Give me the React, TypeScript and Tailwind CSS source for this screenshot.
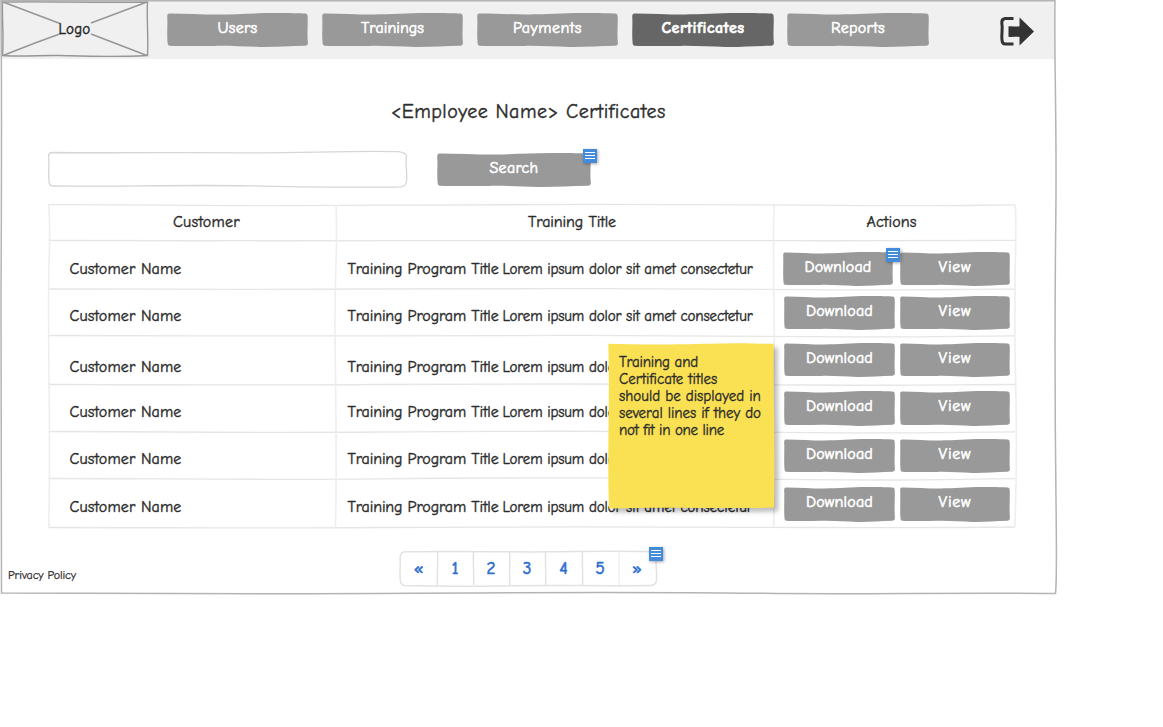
import type { ReactNode } from 'react';

const handwriting = "font-['Comic_Neue',cursive]";

/* Hand-drawn filled block that stretches behind its label. */
function ScribbleFill({ className }: { className: string }) {
  return (
    <svg className={`absolute inset-0 size-full ${className}`} viewBox="0 0 141 34" preserveAspectRatio="none" aria-hidden="true">
      <path d="M2 .4 C20 .3 35 1.6 52 1.500 S85 .2 105 .1 S130 .5 138.500 .4 Q140.600 .6 140.600 3 C141.200 12 139.800 20 140.900 30 Q140.900 32.600 138 32.800 C122 33 108 34.100 93 33.900 S65 32.700 48 32.900 S15 33.200 2.500 32.800 Q.6 32.600 .6 30 C-.3 21 .8 12 .2 3 Q.2 .6 2 .4Z" />
    </svg>
  );
}

function SketchButton({ children, className, active = false }: { children: ReactNode; className: string; active?: boolean }) {
  return (
    <button className={`relative flex shrink-0 justify-center text-base leading-[30px] text-white ${className}`}>
      <ScribbleFill className={active ? 'fill-[#666666]' : 'fill-[#999999]'} />
      <span className={active ? 'relative font-bold [-webkit-text-stroke:0.6px_#fff]' : 'relative [-webkit-text-stroke:0.6px_#fff]'}>{children}</span>
    </button>
  );
}

function NoteMarker({ className }: { className: string }) {
  return (
    <span className={`absolute z-10 flex size-3.5 flex-col items-center gap-[2px] bg-[#438bdb] pt-[3px] shadow-[1px_1px_3px_rgba(0,0,0,0.35)] ${className}`}>
      <span className="h-px w-2.5 bg-white" />
      <span className="h-px w-2.5 bg-white" />
      <span className="h-px w-2.5 bg-white" />
    </span>
  );
}

const tabs = [
  { label: 'Users', width: 'w-[141px] tracking-[0.26px]' },
  { label: 'Trainings', width: 'w-[141px] tracking-[0.03px]' },
  { label: 'Payments', width: 'w-[141px] tracking-[0.5px]' },
  { label: 'Certificates', width: 'w-[142px] -mr-px tracking-[0.48px]', active: true },
  { label: 'Reports', width: 'w-[142px] tracking-[0.3px]' },
];

const rows = [
  { row: 'h-[49px]', text: 'pt-[17px]', actions: 'pt-3 pl-[9px] gap-[7px]', button: 'h-[34px]', download: 'w-[110px]', note: true },
  { row: 'h-[47px]', text: 'pt-[15px]', actions: 'pt-[7px] pl-2.5 gap-[5px]', button: 'h-[34px]', download: 'w-[111px]' },
  { row: 'h-[49px]', text: 'pt-[19px]', actions: 'pt-[7px] pl-2.5 gap-[5px]', button: 'h-[34px]', download: 'w-[111px]' },
  { row: 'h-[47px]', text: 'pt-[15px]', actions: 'pt-1.5 pl-2.5 gap-[5px]', button: 'h-[35px]', download: 'w-[111px]' },
  { row: 'h-[47px]', text: 'pt-[15px]', actions: 'pt-[7px] pl-2.5 gap-[5px]', button: 'h-[34px]', download: 'w-[111px]' },
  { row: 'h-[48px]', text: 'pt-4', actions: 'pt-2 pl-2.5 gap-[5px]', button: 'h-[35px]', download: 'w-[111px]' },
];

const tableColumns = 'grid grid-cols-[287px_438px_242px]';

/* Uneven pencil rules between the table's rows and columns. */
function TableRules() {
  return (
    <svg className="pointer-events-none absolute inset-0 size-full overflow-visible" viewBox="0 0 967 322" fill="none" strokeWidth="1.300" aria-hidden="true">
      <g stroke="#e6e6e6">
        <path d="M-.5 -.3 C110 -.4 160 1.100 290 .4 S620 -1.200 760 .1 S900 .6 966 -.2" />
        <path d="M-.5 35.500 C160 36.200 300 35.200 480 35.600 S800 35.800 966 35.400" />
        <path d="M-.5 84 C120 83.800 170 85 300 84 S620 83.600 760 84.600 S900 84 966 84.200" />
        <path d="M-.5 130.500 C120 130.500 200 131.600 330 130.800 S640 130.400 760 131.600 S900 131 966 130.800" />
        <path d="M-.5 179.500 C120 179.500 200 180.600 330 179.500 S640 179.200 760 180 S900 179.600 966 179.500" />
        <path d="M-.5 226.500 C120 226.500 200 228.200 330 227 S640 226.400 760 227.600 S900 227 966 226.800" />
        <path d="M-.5 273.500 C120 273.500 200 275.200 330 273.800 S640 273.200 760 274.600 S900 274 966 273.600" />
        <path d="M-.5 322.500 C120 322.500 200 323.600 330 322.500 S640 322 760 322.500 S900 322.500 966 322" />
      </g>
      <g stroke="#eeeeee" strokeWidth="1.600">
        <path d="M-.4 0 C1.400 20 .9 30 0 60 S-.4 130 0 170 S.9 270 -.2 322" />
        <path d="M287 0 C288.500 30 287.100 50 286.300 84 S286 130 286.500 170 S287.500 280 286.500 322" />
        <path d="M725.200 0 C723.800 24 724.800 50 724.800 84 S726 130 724.800 170 S725.800 280 724.600 322" />
        <path d="M966.200 0 C968 24 966 50 966 84 S965.500 130 966.500 170 S967.500 280 965.800 322" />
      </g>
    </svg>
  );
}

function LogoBox() {
  return (
    <div className="relative flex h-[58px] w-[149px] justify-center pt-[18px] text-[15px] leading-[22px] tracking-[0.2px] text-[#222]">
      <svg className="absolute inset-0" width="150" height="58" fill="none" stroke="#969696" strokeWidth="1.400" aria-hidden="true">
        <path d="M2.500 2 C50 1 90 3 147.500 2 C146.500 20 148.600 38 147.500 55.500 C110 57.500 80 56 60 55.500 S25 57 2.500 55.500 C4 38 2 22 2.500 2Z" />
        <path d="M3 2 L60 23.500 M91 23 L147 2 M3 55.500 L35 43 L61 33.500 M91 34 L147 55.500" />
      </svg>
      <span className="relative [-webkit-text-stroke:0.4px_#222]">Logo</span>
    </div>
  );
}

function ExitIcon() {
  return (
    <svg className="mt-4 ml-[70px]" width="36" height="31" viewBox="0 0 36 31" aria-hidden="true">
      <path d="M14.500 2.500 H6 Q2.500 3 2.800 7 C4 13 2.200 18 3 24 Q3 28 6.500 28 H14.500" fill="none" stroke="#333" strokeWidth="3" />
      <path d="M9.500 10.300 C13 9.800 17 11 20.500 10.200 V1.500 L35 15.500 L20.500 29.500 V21 C17 20.300 13 21.600 9.500 20.700Z" fill="#333" />
    </svg>
  );
}

const pages = [
  { label: '«', cell: 'w-[37px]' },
  { label: '1', cell: 'w-9' },
  { label: '2', cell: 'w-9' },
  { label: '3', cell: 'w-9' },
  { label: '4', cell: 'w-[37px]' },
  { label: '5', cell: 'w-9' },
  { label: '»', cell: 'w-[38px]' },
];

function Pagination() {
  return (
    <nav className="relative ml-[400px] flex h-[35px] w-[257px] text-center text-[17px] leading-[35px] text-[#2f6fd0] [-webkit-text-stroke:0.7px_#2f6fd0]">
      <svg className="absolute inset-0 overflow-visible" width="257" height="35" fill="none" stroke="#e2e2e2" strokeWidth="1.500" aria-hidden="true">
        <path d="M5 .8 C60 -.2 110 1.300 150 .8 S220 -.2 252 .8 Q256.500 1.500 256.200 6 C255.400 15 257.400 22 256.400 30 Q255.500 34.500 250 34.500 C200 35.200 150 34 110 34.800 S40 35 5 34.500 Q.3 34 .3 29 C-.6 20 .7 14 .1 6 Q.5 1 5 .8Z" />
        <path d="M37.500 1 C38.300 12 36.800 24 37.500 34 M73.500 1 C72.800 12 74.300 24 73.600 34 M109.500 1 C110.300 12 109 24 110 34 M145.600 1 C145 12 146.300 24 145.600 34 M182.500 1 C181.800 12 183.300 24 182.500 34" />
        <path d="M219 1 C218.400 12 219.600 24 219 34" stroke="#f1f1f1" />
      </svg>
      {pages.map((p) => (
        <a key={p.label} className={`relative ${p.cell}`}>{p.label}</a>
      ))}
      <NoteMarker className="top-[-4px] left-[249px]" />
    </nav>
  );
}

function StickyNote() {
  return (
    <aside className="absolute top-[343px] left-[608px] z-20 h-[166px] w-[168px] pt-[11px] pl-[11px] text-[15px] leading-[17px] text-[#2b2b2b] [-webkit-text-stroke:0.35px_#2b2b2b]">
      <svg className="absolute inset-0 overflow-visible drop-shadow-[4px_4px_2px_rgba(0,0,0,0.25)]" width="168" height="166" aria-hidden="true">
        <path d="M.3 .8 C40 2 80 1.200 112 .4 S150 1 165.800 .8 C165 50 167.500 100 166 164.500 C120 166 60 163.500 1 165.500 C-1 110 2 60 .3 .8Z" fill="#fae053" />
      </svg>
      <p className="relative">
        <span className="block tracking-[-0.22px]">Training and</span>
        <span className="block">Certificate titles</span>
        <span className="block">should be displayed in</span>
        <span className="block tracking-[-0.03px]">several lines if they do</span>
        <span className="block tracking-[-0.28px]">not fit in one line</span>
      </p>
    </aside>
  );
}

export default function App() {
  return (
    <div className={`min-h-[727px] bg-white ${handwriting}`}>
      <main className="relative h-[595px] w-[1058px] text-[#2b2b2b]">
        <header className="flex h-[59px] w-[1055px] bg-[#f0f0f0]">
          <LogoBox />
          <nav className="flex gap-3.5 pt-[13px] pl-[18px]">
            {tabs.map((t) => (
              <SketchButton key={t.label} active={t.active} className={`h-[34px] ${t.width}`}>{t.label}</SketchButton>
            ))}
          </nav>
          <ExitIcon />
        </header>

        <h1 className="mt-[38px] pl-[391px] text-[20px] leading-[30px] tracking-[0.48px] [-webkit-text-stroke:0.4px_#2b2b2b]">&lt;Employee Name&gt; Certificates</h1>

        <form className="mt-6 ml-12 flex h-9">
          <div className="relative w-[359px]">
            <svg className="absolute inset-0 overflow-visible" width="359" height="36" fill="none" stroke="#d6d6d6" strokeWidth="1.300" aria-hidden="true">
              <path d="M4 1.500 C70 2.200 130 1.200 190 1.800 S300 -.6 350 .6 Q358 1.500 358.500 5 C357 14 359.500 20 358.500 30 Q358 35.500 353 35.800 C300 37 260 36 200 34.800 S60 35.800 5 35 Q1 35 1 30 C0 20 1.400 14 .6 5 Q.8 1.600 4 1.500Z" />
            </svg>
            <input aria-label="Search certificates" className="relative size-full px-3 outline-none" />
          </div>
          <div className="relative ml-[30px] pt-0.5">
            <SketchButton className="h-[34px] w-[154px] tracking-[0.29px]">Search</SketchButton>
            <NoteMarker className="top-[-2px] left-[146px]" />
          </div>
        </form>

        <section className="relative mt-[18px] ml-[49px] w-[967px] text-base leading-6 [-webkit-text-stroke:0.4px_#2b2b2b]">
          <TableRules />
          <div className={`relative h-[35px] pt-[5px] text-center ${tableColumns}`}>
            <span className="pl-7 tracking-[0.27px]">Customer</span>
            <span className="pl-[34px] tracking-[-0.11px]">Training Title</span>
            <span className="pr-[7px] tracking-[0.12px]">Actions</span>
          </div>
          {rows.map((r, i) => (
            <div key={i} className={`relative ${r.row} ${tableColumns}`}>
              <span className={`pl-[20.5px] tracking-[0.14px] ${r.text}`}>Customer Name</span>
              <span className={`flex items-baseline pl-[11.500px] whitespace-nowrap ${r.text}`}>
                <span className="w-[155px] tracking-[-0.15px]">Training Program Title</span>
                <span className="text-[15px] tracking-[-0.16px]">Lorem ipsum dolor sit amet consectetur</span>
              </span>
              <div className={`flex items-start ${r.actions}`}>
                <div className="relative">
                  <SketchButton className={`tracking-[0.18px] ${r.button} ${r.download}`}>Download</SketchButton>
                  {r.note && <NoteMarker className="top-[-4px] left-[103px]" />}
                </div>
                <SketchButton className={`w-[110px] tracking-[0.8px] ${r.button}`}>View</SketchButton>
              </div>
            </div>
          ))}
        </section>

        <div className="mt-6">
          <Pagination />
        </div>
        <a className="-mt-5 block w-[90px] pl-2 text-[12px] leading-[18px] tracking-[-0.1px] [-webkit-text-stroke:0.25px_#2b2b2b]">Privacy Policy</a>

        <StickyNote />

        <svg className="pointer-events-none absolute inset-0" width="1060" height="596" fill="none" stroke="#b4b4b4" strokeWidth="1.500" aria-hidden="true">
          <path d="M1 .8 C200 1.500 400 .2 600 .8 S900 .2 1055 .8 C1054 60 1057 120 1055.800 220 S1055 420 1056 500 S1056.500 580 1055.500 593.500 C950 592.500 860 594.500 760 593.300 S500 592.500 380 593.500 S150 592.500 1.500 593 C2 520 .5 420 1 300 S2 100 1 .8Z" />
        </svg>
      </main>
    </div>
  );
}
